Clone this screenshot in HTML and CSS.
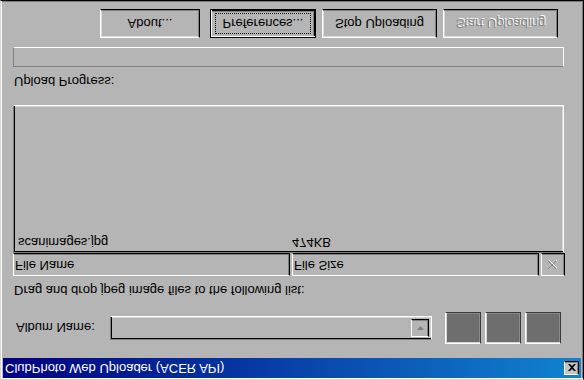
FILE: index.html
```html
<!DOCTYPE html>
<html>
<head>
<meta charset="utf-8">
<link rel="stylesheet" href="styles.css">
</head>
<body>
<div class="window">
  <div class="titlebar">
    <span class="title">ClubPhoto Web Uploader (ACER API)</span>
    <span class="close-btn"><svg width="8" height="7" viewBox="0 0 8 7"><path d="M0 0h2l2 2 2-2h2L5 3.5 8 7H6L4 5 2 7H0l3-3.5z" fill="#000"/></svg></span>
  </div>
  <div class="client">
    <div class="album-row">
      <span class="album-label">Album Name:</span>
      <div class="combo">
        <span class="combo-btn"><svg width="7" height="4" viewBox="0 0 7 4"><path d="M0 0h7L3.5 4z" fill="#808080"/></svg></span>
      </div>
      <div class="tiles">
        <span class="tile"></span><span class="tile"></span><span class="tile"></span>
      </div>
    </div>
    <div class="hint">Drag and drop jpeg image files to the following list:</div>
    <div class="list-header">
      <span class="col col-name">File Name</span>
      <span class="col col-size">File Size</span>
      <span class="col col-x"><svg width="12" height="11" viewBox="0 0 12 11"><path d="M2 2l8 8M10 2l-8 8" stroke="#fff" stroke-width="1"/><path d="M1 1l8 8M9 1l-8 8" stroke="#8a8a8a" stroke-width="1"/></svg></span>
    </div>
    <div class="list">
      <div class="row"><span class="cell-name">scanimages.jpg</span><span class="cell-size">474KB</span></div>
    </div>
    <div class="progress-label">Upload Progress:</div>
    <div class="progress"></div>
    <div class="buttons">
      <button class="btn btn-about">About...</button>
      <button class="btn btn-default"><span class="focus">Preferences...</span></button>
      <button class="btn btn-wide">Stop Uploading</button>
      <button class="btn btn-wide btn-disabled">Start Uploading</button>
    </div>
  </div>
</div>
</body>
</html>
```
FILE: styles.css
```css
* { box-sizing: border-box; }
html, body { margin: 0; padding: 0; }
body {
  width: 584px;
  height: 380px;
  overflow: hidden;
  background: #b5b5b5;
  font-family: "Liberation Sans", Arial, sans-serif;
  font-size: 13px;
  color: #000;
}
.window {
  width: 584px;
  height: 380px;
  transform: scaleY(-1);
  background: #b5b5b5;
  border: 1px solid;
  border-color: #d6d6d6 #000 #000 #d6d6d6;
  box-shadow: inset 1px 1px 0 #fff, inset -1px -1px 0 #7a7a7a;
  padding: 1px 2px 0 2px;
  display: flex;
  flex-direction: column;
}
.titlebar {
  height: 20px;
  flex: none;
  background: linear-gradient(to right, #000080, #1084d0);
  color: #fff;
  display: flex;
  align-items: center;
  justify-content: space-between;
  padding: 0 2px 0 2px;
}
.title { font-size: 13px; line-height: 16px; }
.close-btn {
  width: 15px;
  height: 14px;
  background: #c6c6c6;
  border: 1px solid;
  border-color: #fff #000 #000 #fff;
  box-shadow: inset -1px -1px 0 #808080;
  display: flex;
  align-items: center;
  justify-content: center;
}
.client {
  flex: 1;
  display: flex;
  flex-direction: column;
  padding: 0 17px 0 10px;
}
.album-row {
  margin-top: 14px;
  height: 32px;
  display: flex;
  align-items: center;
  flex: none;
}
.album-label {
  width: 94px;
  margin-left: 3px;
}
.combo {
  width: 322px;
  height: 24px;
  border: 1px solid;
  border-color: #808080 #fff #fff #808080;
  box-shadow: inset 1px 1px 0 #000, inset -1px -1px 0 #d6d6d6;
  display: flex;
  justify-content: flex-end;
  padding: 2px;
}
.combo-btn {
  width: 18px;
  height: 18px;
  border: 1px solid;
  border-color: #fff #000 #000 #fff;
  box-shadow: inset -1px -1px 0 #808080;
  display: flex;
  align-items: center;
  justify-content: center;
}
.tiles {
  display: flex;
  gap: 4px;
  margin-left: 13px;
}
.tile {
  width: 36px;
  height: 32px;
  background: #6e6e6e;
  border: 1px solid;
  border-color: #fff #3a3a3a #3a3a3a #fff;
  box-shadow: inset 1px 1px 0 #d8d8d8, inset -1px -1px 0 #8a8a8a;
}
.hint {
  margin-top: 14px;
  margin-left: 1px;
  height: 16px;
  line-height: 16px;
  flex: none;
}
.list-header {
  margin-top: 6px;
  height: 23px;
  display: flex;
  gap: 2px;
  flex: none;
  width: 552px;
}
.col {
  height: 23px;
  border: 1px solid;
  border-color: #fff #000 #000 #fff;
  box-shadow: inset -1px -1px 0 #808080;
  padding-left: 1px;
  line-height: 20px;
}
.col-name { width: 278px; }
.col-size { width: 248px; }
.col-x {
  width: 24px;
  display: flex;
  align-items: center;
  justify-content: center;
  padding: 0;
}
.list {
  height: 148px;
  flex: none;
  border: 1px solid;
  border-color: #808080 #fff #fff #808080;
  box-shadow: inset 1px 1px 0 #000, inset -1px -1px 0 #d6d6d6;
  padding: 2px 4px;
}
.row {
  display: flex;
  line-height: 16px;
}
.cell-name { width: 274px; }
.progress-label {
  margin-top: 16px;
  margin-left: 1px;
  height: 16px;
  line-height: 16px;
  flex: none;
}
.progress {
  margin-top: 6px;
  height: 20px;
  flex: none;
  border: 1px solid;
  border-color: #808080 #fff #fff #808080;
}
.buttons {
  margin-top: 9px;
  display: flex;
  justify-content: flex-end;
  gap: 6px;
  padding-right: 6px;
  flex: none;
}
.btn {
  font: inherit;
  font-size: 13px;
  color: #000;
  height: 29px;
  background: #b5b5b5;
  border: 1px solid;
  border-color: #fff #000 #000 #fff;
  box-shadow: inset -1px -1px 0 #808080, inset 1px 1px 0 #dadada;
  padding: 0;
  margin: 0;
  display: flex;
  align-items: center;
  justify-content: center;
}
.btn-about { width: 100px; margin-right: 4px; }
.btn-default {
  width: 106px;
  border: 1px solid #000;
  box-shadow: inset 1px 1px 0 #fff, inset -1px -1px 0 #000, inset -2px -2px 0 #808080;
}
.focus {
  border: 1px dotted #000;
  padding: 3px 6px;
  line-height: 14px;
  width: 96px;
  height: 21px;
  display: flex;
  align-items: center;
  justify-content: center;
}
.btn-wide { width: 115px; }
.btn-disabled {
  color: #858585;
  text-shadow: 1px 1px 0 #fff;
}
```
